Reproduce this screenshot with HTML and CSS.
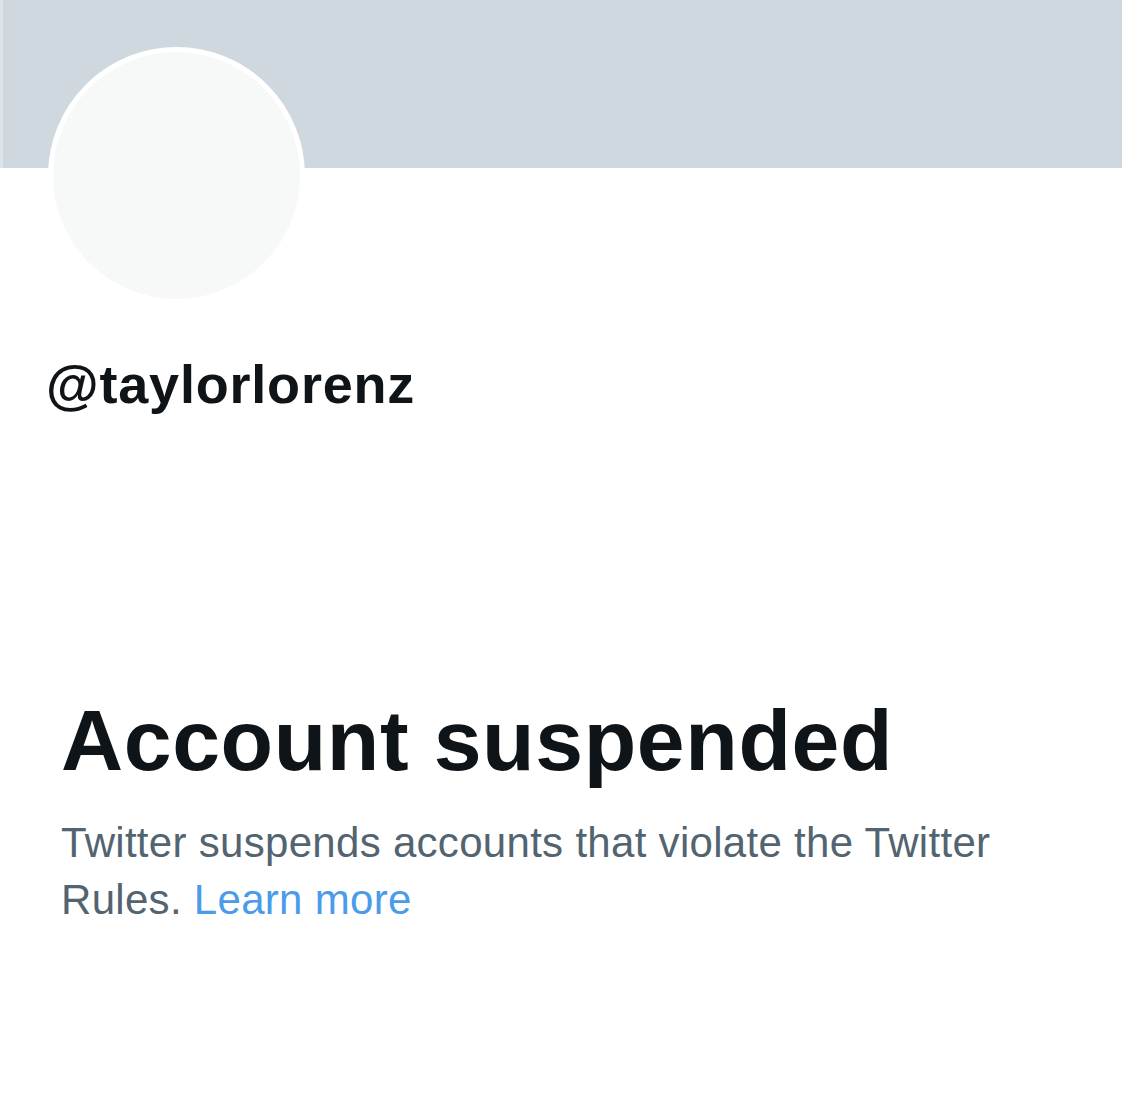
FILE: index.html
```html
<!DOCTYPE html>
<html lang="en">
<head>
    <meta charset="UTF-8">
    <meta name="viewport" content="width=device-width, initial-scale=1.0">
    <title>@taylorlorenz</title>
    <link rel="stylesheet" href="styles.css">
</head>
<body>
    <div class="profile">
        <div class="banner"></div>
        <div class="avatar"></div>
        <h2 class="handle">@taylorlorenz</h2>
    </div>
    <div class="notice">
        <h1 class="notice-title">Account suspended</h1>
        <p class="notice-text">Twitter suspends accounts that violate the Twitter Rules. <a href="#" class="notice-link">Learn more</a></p>
    </div>
</body>
</html>
```

FILE: styles.css
```css
body {
    font-family: "Liberation Sans", Arial, sans-serif;
    background-color: #fff;
    margin: 0;
    padding: 0;
    color: #0f1419;
}
.profile {
    padding-bottom: 1px;
}
.banner {
    width: 1119px;
    height: 168px;
    background-color: #cfd8de;
    border-left: 3px solid #dde3e7;
}
.avatar {
    width: 247px;
    height: 247px;
    margin: -121px 0 0 48px;
    border: 5px solid #fff;
    border-radius: 50%;
    background-color: #f7f9f9;
}
.handle {
    margin: 48px 0 0 46px;
    font-size: 54px;
    line-height: 1.2;
    font-weight: bold;
    letter-spacing: 0.8px;
}
.notice {
    padding: 271px 0 0 61px;
    max-width: 960px;
}
.notice-title {
    margin: 0;
    font-size: 86px;
    line-height: 1.2;
    font-weight: bold;
    letter-spacing: 0.6px;
}
.notice-text {
    margin: 22px 0 0 0;
    font-size: 42px;
    line-height: 57px;
    letter-spacing: 0.3px;
    color: #536471;
}
.notice-link {
    color: #4a9be9;
    text-decoration: none;
}
```
